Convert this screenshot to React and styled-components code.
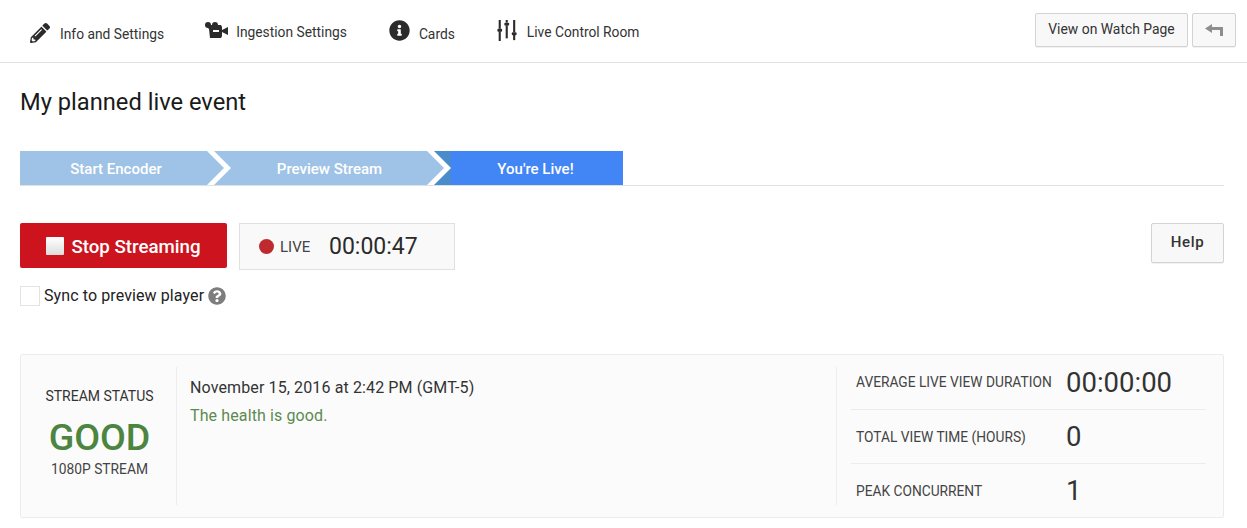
import React from 'react'
import styled, { createGlobalStyle } from 'styled-components'
import { FaInfoCircle, FaPencilAlt, FaQuestionCircle } from 'react-icons/fa'

const GlobalStyle = createGlobalStyle`
  html, body {
    margin: 0;
    background: #fff;
    font-family: Roboto, "Liberation Sans", sans-serif;
    color: #333;
  }
`

const Page = styled.div`
  width: 1247px;
  height: 528px;
  overflow: hidden;
`

const TopBar = styled.header`
  height: 62px;
  box-sizing: content-box;
  border-bottom: 1px solid #e0e0e0;
  display: flex;
  align-items: flex-start;
  padding: 0 11px 0 30px;
`

const Nav = styled.nav`
  display: flex;
  flex: 1;
`

const NavItem = styled.a`
  display: flex;
  align-items: center;
  height: 24px;
  margin-top: ${p => p.$top}px;
  margin-right: ${p => p.$gap}px;
  font-size: 13.8px;
  color: #333;
  white-space: nowrap;
`

const NavIcon = styled.span`
  display: flex;
  width: ${p => p.$width}px;
  margin-right: ${p => p.$gap}px;
  color: #2b2b2b;
  position: relative;
  top: ${p => p.$lift}px;
`

const TopActions = styled.div`
  display: flex;
  gap: 4px;
  padding-top: 13px;
`

const GreyButton = styled.button`
  box-sizing: border-box;
  height: ${p => p.$height}px;
  width: ${p => p.$width}px;
  padding: 0 0 ${p => p.$lift || 0}px;
  display: flex;
  align-items: center;
  justify-content: center;
  background: #f8f8f8;
  border: 1px solid #d3d3d3;
  border-radius: 2px;
  box-shadow: 0 1px 1px rgba(0, 0, 0, 0.06);
  font-family: Roboto, sans-serif;
  font-size: ${p => p.$size || 14}px;
  font-weight: ${p => p.$weight || 400};
  letter-spacing: ${p => p.$spacing || 0}px;
  color: #333;
`

const Content = styled.main`
  padding: 0 23px 0 20px;
`

const Title = styled.h1`
  margin: 26px 0 36px;
  font-size: 23.7px;
  line-height: 26px;
  font-weight: 400;
  color: #1a1a1a;
`

const StepTrack = styled.div`
  display: flex;
  height: 35px;
  border-bottom: 1px solid #e0e0e0;
  box-sizing: border-box;
`

const Step = styled.div`
  position: relative;
  width: ${p => p.$width}px;
  height: 34px;
  padding: 2px ${p => p.$right || 0}px 0 ${p => p.$left || 0}px;
  box-sizing: border-box;
  display: flex;
  align-items: center;
  justify-content: center;
  background: ${p => (p.$active ? '#4285f4' : '#9fc3e6')};
  color: #fff;
  font-size: 15px;
  font-weight: 500;
`

const StepLabel = styled.span`
  position: relative;
`

const ActiveWedge = styled.span`
  position: absolute;
  left: 0;
  top: 0;
  width: 17px;
  height: 34px;
  background: #4a8bcb;
`

const ChevronOuter = styled.span`
  position: absolute;
  z-index: 2;
  right: -17px;
  top: 0;
  width: 24px;
  height: 34px;
  background: #fff;
  clip-path: polygon(0 0, 7px 0, 24px 50%, 7px 100%, 0 100%);
`

const ChevronInner = styled.span`
  position: absolute;
  z-index: 3;
  right: -10px;
  top: 0;
  width: 17px;
  height: 34px;
  background: #9fc3e6;
  clip-path: polygon(0 0, 100% 50%, 0 100%);
`

const ControlRow = styled.div`
  display: flex;
  align-items: flex-start;
  margin-top: 37px;
`

const StopButton = styled.button`
  width: 207px;
  height: 45px;
  padding: 2px 0 0;
  display: flex;
  align-items: center;
  justify-content: center;
  gap: 7px;
  background: #cd141e;
  border: 0;
  border-radius: 2px;
  color: #fff;
  font-family: Roboto, sans-serif;
  font-size: 18.7px;
  font-weight: 500;
`

const StopGlyph = styled.span`
  width: 18px;
  height: 18px;
  margin-bottom: 2px;
  background: linear-gradient(#fff, #ddd);
  border-radius: 1px;
`

const LiveBox = styled.div`
  box-sizing: border-box;
  width: 216px;
  height: 47px;
  margin-left: 12px;
  padding-left: 19px;
  display: flex;
  align-items: center;
  background: #f9f9f9;
  border: 1px solid #e0e0e0;
`

const LiveDot = styled.span`
  width: 15px;
  height: 15px;
  border-radius: 50%;
  background: #bf2a2e;
`

const LiveLabel = styled.span`
  margin-left: 6px;
  width: 49px;
  font-size: 15px;
  color: #444;
`

const Clock = styled.span`
  font-size: 23px;
  color: #2b2b2b;
`

const Spacer = styled.div`
  flex: 1;
`

const SyncRow = styled.label`
  display: flex;
  align-items: center;
  margin-top: 15px;
  height: 21px;
  font-size: 16px;
  letter-spacing: 0.1px;
  color: #222;
`

const CheckBox = styled.span`
  box-sizing: border-box;
  width: 20px;
  height: 20px;
  margin-right: 4px;
  background: #fff;
  border: 1px solid #e3e3e3;
`

const HelpIcon = styled.span`
  display: flex;
  margin-left: 4px;
  color: #7d7d7d;
`

const StatusPanel = styled.section`
  box-sizing: border-box;
  height: 164px;
  margin-top: 48px;
  padding: 12px 17px 12px 0;
  display: flex;
  background: #fbfbfb;
  border: 1px solid #ececec;
  border-radius: 2px;
`

const StatusColumn = styled.div`
  box-sizing: border-box;
  width: 156px;
  padding: 21px 0 0 2px;
  border-right: 1px solid #eeeeee;
  display: flex;
  flex-direction: column;
  align-items: center;
  text-align: center;
`

const StatusHeading = styled.div`
  font-size: 14px;
  line-height: 16px;
  color: #333;
`

const StatusValue = styled.div`
  font-size: 37.5px;
  line-height: 42px;
  font-weight: 500;
  margin-top: 12px;
  color: #4c8540;
`

const StatusNote = styled.div`
  font-size: 13.8px;
  line-height: 16px;
  margin-top: 3px;
  color: #444;
`

const HealthColumn = styled.div`
  flex: 1;
  padding: 11px 0 0 13px;
  border-right: 1px solid #eeeeee;
`

const HealthDate = styled.div`
  font-size: 16px;
  line-height: 20px;
  letter-spacing: 0.12px;
  color: #333;
`

const HealthText = styled.div`
  font-size: 16px;
  line-height: 20px;
  letter-spacing: 0.12px;
  margin-top: 8px;
  color: #5b8a52;
`

const MetricColumn = styled.div`
  width: 369px;
  margin: -12px 0;
  padding-left: 14px;
  box-sizing: border-box;
  display: flex;
  flex-direction: column;
`

const Metric = styled.div`
  flex: 0 0 54px;
  box-sizing: border-box;
  display: flex;
  align-items: center;
  padding-left: 5px;
  border-top: ${p => (p.$first ? '0' : '1px solid #ececec')};
`

const MetricName = styled.span`
  width: 210px;
  font-size: 13.75px;
  color: #444;
`

const MetricValue = styled.span`
  font-size: 27.5px;
  color: #333;
`

const CameraIcon = () => (
  <svg width="24" height="17" viewBox="0 0 24 17">
    <circle cx="3" cy="3" r="3" fill="currentColor" />
    <circle cx="10" cy="3" r="3" fill="currentColor" />
    <path fill="currentColor" d="M3 3h13l1 2v3l6-3v8l-6-3v4l-1 2H5L4 7 3 6z" />
    <rect x="8" y="8" width="6" height="2" fill="#fff" />
  </svg>
)

const SlidersIcon = () => (
  <svg width="20" height="21" viewBox="0 0 22 24" fill="currentColor">
    <rect x="1.5" y="0" width="2.4" height="10" />
    <rect x="0" y="10" width="5.4" height="3.4" rx="1" />
    <rect x="1.5" y="13" width="2.4" height="11" />
    <rect x="9.5" y="0" width="2.4" height="3" />
    <rect x="8" y="3" width="5.4" height="3.4" rx="1" />
    <rect x="9.5" y="6" width="2.4" height="15" />
    <rect x="18" y="0" width="2.4" height="14" />
    <rect x="16.5" y="14" width="5.4" height="3.4" rx="1" />
    <rect x="18" y="17" width="2.4" height="6" />
  </svg>
)

const BackIcon = () => (
  <svg width="18" height="12" viewBox="0 0 18 12">
    <path fill="#8e8e8e" d="M0 4.5 7 0v3h11v9h-3V6H7v3z" />
  </svg>
)

const App = () => (
  <Page>
    <GlobalStyle />
    <TopBar>
      <Nav>
        <NavItem $top={22} $gap={41}>
          <NavIcon $width={20} $gap={10} $lift={-1}><FaPencilAlt size={20} /></NavIcon>
          Info and Settings
        </NavItem>
        <NavItem $top={20} $gap={42}>
          <NavIcon $width={24} $gap={7} $lift={-2}><CameraIcon /></NavIcon>
          Ingestion Settings
        </NavItem>
        <NavItem $top={22} $gap={42}>
          <NavIcon $width={21} $gap={9} $lift={-4}><FaInfoCircle size={21} /></NavIcon>
          Cards
        </NavItem>
        <NavItem $top={20} $gap={0}>
          <NavIcon $width={20} $gap={10} $lift={-2}><SlidersIcon /></NavIcon>
          Live Control Room
        </NavItem>
      </Nav>
      <TopActions>
        <GreyButton $width={153} $height={34} $lift={2} $size={13.9}>View on Watch Page</GreyButton>
        <GreyButton $width={44} $height={34}><BackIcon /></GreyButton>
      </TopActions>
    </TopBar>
    <Content>
      <Title>My planned live event</Title>
      <StepTrack>
        <Step $width={194} $right={2}>
          Start Encoder
          <ChevronOuter />
          <ChevronInner />
        </Step>
        <Step $width={220} $left={11}>
          Preview Stream
          <ChevronOuter />
          <ChevronInner />
        </Step>
        <Step $width={189} $left={14} $active>
          <ActiveWedge />
          <StepLabel>You're Live!</StepLabel>
        </Step>
      </StepTrack>
      <ControlRow>
        <StopButton><StopGlyph />Stop Streaming</StopButton>
        <LiveBox>
          <LiveDot />
          <LiveLabel>LIVE</LiveLabel>
          <Clock>00:00:47</Clock>
        </LiveBox>
        <Spacer />
        <GreyButton $width={73} $height={40} $weight={500} $size={15} $spacing={0.6} $lift={3}>Help</GreyButton>
      </ControlRow>
      <SyncRow>
        <CheckBox />
        Sync to preview player
        <HelpIcon><FaQuestionCircle size={18} /></HelpIcon>
      </SyncRow>
      <StatusPanel>
        <StatusColumn>
          <StatusHeading>STREAM STATUS</StatusHeading>
          <StatusValue>GOOD</StatusValue>
          <StatusNote>1080P STREAM</StatusNote>
        </StatusColumn>
        <HealthColumn>
          <HealthDate>November 15, 2016 at 2:42 PM (GMT-5)</HealthDate>
          <HealthText>The health is good.</HealthText>
        </HealthColumn>
        <MetricColumn>
          <Metric $first><MetricName>AVERAGE LIVE VIEW DURATION</MetricName><MetricValue>00:00:00</MetricValue></Metric>
          <Metric><MetricName>TOTAL VIEW TIME (HOURS)</MetricName><MetricValue>0</MetricValue></Metric>
          <Metric><MetricName>PEAK CONCURRENT</MetricName><MetricValue>1</MetricValue></Metric>
        </MetricColumn>
      </StatusPanel>
    </Content>
  </Page>
)

export default App
